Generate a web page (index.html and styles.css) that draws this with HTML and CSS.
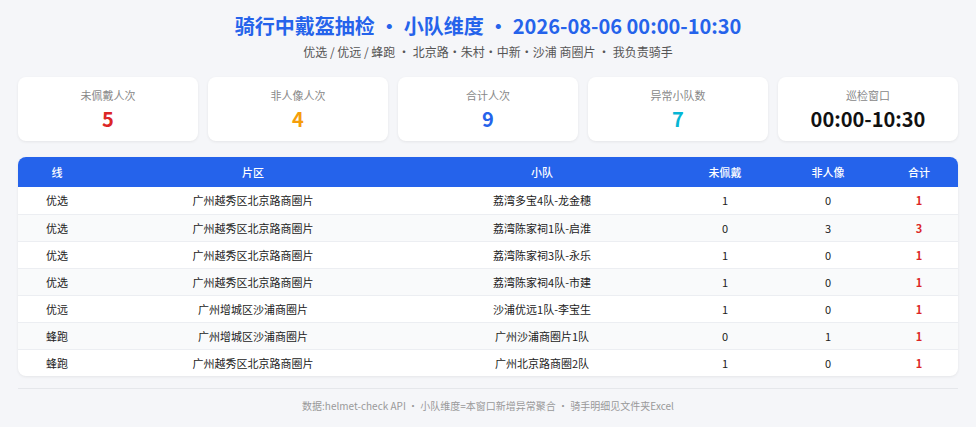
FILE: index.html
```html
<!DOCTYPE html>
<html lang="zh">
<head>
<meta charset="utf-8">
<title>骑行中戴盔抽检</title>
<link rel="stylesheet" href="styles.css">
</head>
<body>
<div class="page">
  <header class="head">
    <h1 class="title">骑行中戴盔抽检 · 小队维度 · 2026-08-06 00:00-10:30</h1>
    <p class="sub">优选 / 优远 / 蜂跑 · 北京路·朱村·中新·沙浦 商圈片 · 我负责骑手</p>
  </header>
  <section class="cards">
    <div class="card"><div class="label">未佩戴人次</div><div class="value red">5</div></div>
    <div class="card"><div class="label">非人像人次</div><div class="value amber">4</div></div>
    <div class="card"><div class="label">合计人次</div><div class="value blue">9</div></div>
    <div class="card"><div class="label">异常小队数</div><div class="value cyan">7</div></div>
    <div class="card"><div class="label">巡检窗口</div><div class="value dark">00:00-10:30</div></div>
  </section>
  <div class="table-wrap">
    <table class="tbl">
      <colgroup>
        <col class="c1"><col class="c2"><col class="c3"><col class="c4"><col class="c5"><col class="c6">
      </colgroup>
      <thead>
        <tr><th>线</th><th>片区</th><th>小队</th><th>未佩戴</th><th>非人像</th><th>合计</th></tr>
      </thead>
      <tbody>
        <tr><td>优选</td><td>广州越秀区北京路商圈片</td><td>荔湾多宝4队-龙金穗</td><td>1</td><td>0</td><td class="tot">1</td></tr>
        <tr><td>优选</td><td>广州越秀区北京路商圈片</td><td>荔湾陈家祠1队-启淮</td><td>0</td><td>3</td><td class="tot">3</td></tr>
        <tr><td>优选</td><td>广州越秀区北京路商圈片</td><td>荔湾陈家祠3队-永乐</td><td>1</td><td>0</td><td class="tot">1</td></tr>
        <tr><td>优选</td><td>广州越秀区北京路商圈片</td><td>荔湾陈家祠4队-市建</td><td>1</td><td>0</td><td class="tot">1</td></tr>
        <tr><td>优远</td><td>广州增城区沙浦商圈片</td><td>沙浦优远1队-李宝生</td><td>1</td><td>0</td><td class="tot">1</td></tr>
        <tr><td>蜂跑</td><td>广州增城区沙浦商圈片</td><td>广州沙浦商圈片1队</td><td>0</td><td>1</td><td class="tot">1</td></tr>
        <tr><td>蜂跑</td><td>广州越秀区北京路商圈片</td><td>广州北京路商圈2队</td><td>1</td><td>0</td><td class="tot">1</td></tr>
      </tbody>
    </table>
  </div>
  <footer class="foot">数据:helmet-check API · 小队维度=本窗口新增异常聚合 · 骑手明细见文件夹Excel</footer>
</div>
</body>
</html>
```

FILE: styles.css
```css
* { box-sizing: border-box; }
html, body {
  margin: 0;
  padding: 0;
  background: #f5f6f9;
  font-family: "Noto Sans CJK SC", "Noto Sans", sans-serif;
  color: #222;
}
.page {
  padding: 12px 18px 0;
}
.head {
  text-align: center;
}
.title {
  margin: 0;
  font-size: 20px;
  line-height: 28px;
  font-weight: 700;
  color: #2563eb;
}
.sub {
  margin: 3px 0 0;
  font-size: 12px;
  line-height: 18px;
  color: #555;
}
.cards {
  display: grid;
  grid-template-columns: repeat(5, 1fr);
  gap: 10px;
  margin-top: 16px;
}
.card {
  height: 64px;
  background: #fff;
  border-radius: 8px;
  box-shadow: 0 1px 3px rgba(0,0,0,0.07);
  display: flex;
  flex-direction: column;
  align-items: center;
  justify-content: center;
}
.label {
  font-size: 11px;
  line-height: 16px;
  color: #888;
}
.value {
  margin-top: 3px;
  font-size: 20px;
  line-height: 26px;
  font-weight: 700;
}
.red { color: #dc2626; }
.amber { color: #f59e0b; }
.blue { color: #2563eb; }
.cyan { color: #06b6d4; }
.dark { color: #111; }
.table-wrap {
  margin-top: 16px;
  background: #fff;
  border-radius: 8px;
  overflow: hidden;
  box-shadow: 0 1px 3px rgba(0,0,0,0.07);
}
.tbl {
  width: 100%;
  border-collapse: collapse;
  table-layout: fixed;
  font-size: 11px;
}
.c1 { width: 78px; }
.c2 { width: 314px; }
.c3 { width: 264px; }
.c4 { width: 102px; }
.c5 { width: 104px; }
.c6 { width: 78px; }
.tbl th {
  background: #2563eb;
  color: #fff;
  font-weight: 500;
  height: 30px;
  padding: 0;
  text-align: center;
}
.tbl td {
  height: 27px;
  padding: 0;
  text-align: center;
  color: #222;
  border-top: 1px solid #eceef2;
}
.tbl tbody tr:first-child td { border-top: none; }
.tbl tbody tr:nth-child(even) td { background: #f9fafb; }
.tbl td.tot {
  color: #dc2626;
  font-weight: 700;
}
.foot {
  margin-top: 12px;
  border-top: 1px solid #e5e7eb;
  padding-top: 10px;
  text-align: center;
  font-size: 10px;
  line-height: 14px;
  color: #999;
}
```
